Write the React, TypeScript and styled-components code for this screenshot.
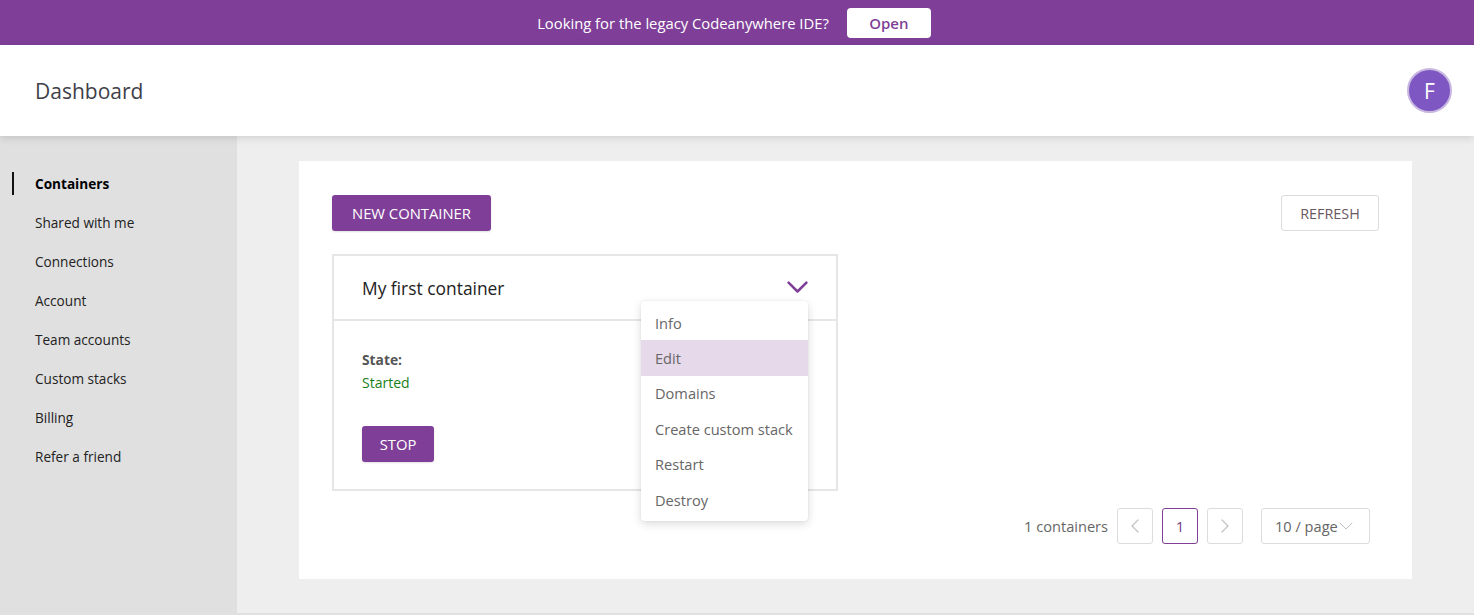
import React from "react";
import styled, { createGlobalStyle } from "styled-components";

const Global = createGlobalStyle`
  html, body { margin: 0; padding: 0; }
  body {
    font-family: "Open Sans", "Noto Sans", "Liberation Sans", sans-serif;
    background: #eeeeee;
    width: 1474px;
    height: 615px;
    overflow: hidden;
  }
  * { box-sizing: border-box; }
`;

const PURPLE = "#7f3f98";

const Page = styled.div`
  display: flex;
  flex-direction: column;
  height: 615px;
`;

const Banner = styled.div`
  height: 45px;
  background: ${PURPLE};
  display: flex;
  align-items: center;
  justify-content: center;
  gap: 18px;
  padding-right: 6px;
  color: #fff;
  font-size: 14.8px;
`;

const BannerText = styled.span``;

const OpenButton = styled.button`
  width: 84px;
  height: 30px;
  border: none;
  border-radius: 4px;
  background: #fff;
  color: ${PURPLE};
  font-family: inherit;
  font-size: 15px;
  font-weight: 600;
`;

const Header = styled.header`
  height: 91px;
  background: #fff;
  display: flex;
  align-items: center;
  justify-content: space-between;
  padding: 0 22px 0 35px;
  box-shadow: 0 2px 8px rgba(0, 0, 0, 0.13);
  position: relative;
  z-index: 2;
`;

const Title = styled.h1`
  margin: 0;
  font-size: 21px;
  font-weight: 400;
  color: #3f3f4a;
`;

const Avatar = styled.div`
  width: 45px;
  height: 45px;
  border-radius: 50%;
  background: #7e57c2;
  border: 2px solid #c9b8e2;
  color: #fff;
  display: flex;
  align-items: center;
  justify-content: center;
  font-size: 21px;
`;

const Body = styled.div`
  flex: 1;
  display: flex;
  min-height: 0;
`;

const Sidebar = styled.nav`
  width: 237px;
  background: #e0e0e0;
  padding-top: 28px;
  display: flex;
  flex-direction: column;
`;

const NavItem = styled.div<{ $active?: boolean }>`
  position: relative;
  height: 39px;
  display: flex;
  align-items: center;
  padding-left: 35px;
  font-size: 13.6px;
  color: ${(p) => (p.$active ? "#000" : "#222")};
  font-weight: ${(p) => (p.$active ? 700 : 400)};
  &::before {
    content: "";
    display: ${(p) => (p.$active ? "block" : "none")};
    position: absolute;
    left: 12px;
    top: 8px;
    width: 2px;
    height: 23px;
    background: #111;
  }
`;

const Main = styled.main`
  flex: 1;
  padding: 25px 62px 0 62px;
  border-bottom: 2px solid #e0e0e0;
`;

const Panel = styled.section`
  background: #fff;
  height: 418px;
  padding: 34px 33px 0 33px;
  display: flex;
  flex-direction: column;
`;

const Toolbar = styled.div`
  display: flex;
  justify-content: space-between;
  align-items: center;
`;

const PrimaryButton = styled.button<{ $w: number }>`
  width: ${(p) => p.$w}px;
  height: 36px;
  border: none;
  border-radius: 3px;
  background: ${PURPLE};
  color: #fff;
  font-family: inherit;
  font-size: 14.8px;
  text-transform: uppercase;
  box-shadow: 0 1px 2px rgba(0, 0, 0, 0.12);
`;

const OutlineButton = styled.button`
  width: 98px;
  height: 36px;
  background: #fff;
  border: 1px solid #dcdcdc;
  border-radius: 3px;
  color: #6b5761;
  font-family: inherit;
  font-size: 14.4px;
  text-transform: uppercase;
`;

const ContainerCard = styled.div`
  position: relative;
  margin-top: 23px;
  width: 506px;
  height: 237px;
  border: 2px solid #e6e6e6;
`;

const CardHeader = styled.div`
  height: 65px;
  display: flex;
  align-items: center;
  justify-content: space-between;
  padding: 0 28px 0 28px;
  border-bottom: 2px solid #e6e6e6;
`;

const CardTitle = styled.div`
  font-size: 17.4px;
  font-weight: 500;
  color: #222;
`;

const CardBody = styled.div`
  padding: 29px 28px 0 28px;
  display: flex;
  flex-direction: column;
`;

const Label = styled.div`
  font-size: 13.8px;
  font-weight: 700;
  color: #555;
  line-height: 20px;
`;

const StateValue = styled.div`
  font-size: 14px;
  color: #1a7f1a;
  line-height: 26px;
`;

const StopWrap = styled.div`
  margin-top: 30px;
`;

const Menu = styled.ul`
  position: absolute;
  left: 307px;
  top: 45px;
  width: 167px;
  margin: 0;
  padding: 4px 0;
  list-style: none;
  background: #fff;
  border-radius: 4px;
  box-shadow: 0 3px 10px rgba(0, 0, 0, 0.14), 0 0 2px rgba(0, 0, 0, 0.08);
`;

const MenuItem = styled.li<{ $hl?: boolean }>`
  height: 35.4px;
  display: flex;
  align-items: center;
  padding-left: 14px;
  font-size: 14.6px;
  color: #666;
  background: ${(p) => (p.$hl ? "#e6d9ea" : "transparent")};
`;

const Pager = styled.div`
  margin-top: 17px;
  margin-right: 9px;
  display: flex;
  justify-content: flex-end;
  align-items: center;
`;

const Count = styled.span`
  font-size: 14.6px;
  color: #666;
  margin-right: 9px;
`;

const PageBox = styled.div<{ $active?: boolean }>`
  width: 36px;
  height: 36px;
  margin-right: 9px;
  border: 1px solid ${(p) => (p.$active ? PURPLE : "#dcdcdc")};
  border-radius: 3px;
  display: flex;
  align-items: center;
  justify-content: center;
  font-size: 15px;
  color: ${(p) => (p.$active ? "#7a3c7c" : "#c4c4c4")};
`;

const SizeSelect = styled.div`
  margin-left: 9px;
  width: 109px;
  height: 36px;
  border: 1px solid #dcdcdc;
  border-radius: 3px;
  display: flex;
  align-items: center;
  padding-left: 13px;
  font-size: 14.6px;
  color: #666;
  gap: 1px;
`;

const Chevron = ({ size, color, stroke }: { size: number; color: string; stroke: number }) => (
  <svg width={size} height={size * 0.6} viewBox="0 0 20 12" fill="none">
    <path d="M1.5 1.5 L10 10 L18.5 1.5" stroke={color} strokeWidth={stroke} strokeLinecap="round" strokeLinejoin="round" />
  </svg>
);

const Arrow = ({ dir }: { dir: "left" | "right" }) => (
  <svg width="8" height="14" viewBox="0 0 8 14" fill="none">
    <path
      d={dir === "left" ? "M7 1 L1 7 L7 13" : "M1 1 L7 7 L1 13"}
      stroke="#c4c4c4"
      strokeWidth="1.3"
      strokeLinecap="round"
      strokeLinejoin="round"
    />
  </svg>
);

const navItems = [
  "Containers",
  "Shared with me",
  "Connections",
  "Account",
  "Team accounts",
  "Custom stacks",
  "Billing",
  "Refer a friend",
];

const menuItems = ["Info", "Edit", "Domains", "Create custom stack", "Restart", "Destroy"];

export default function App() {
  return (
    <>
      <Global />
      <Page>
        <Banner>
          <BannerText>Looking for the legacy Codeanywhere IDE?</BannerText>
          <OpenButton>Open</OpenButton>
        </Banner>
        <Header>
          <Title>Dashboard</Title>
          <Avatar>F</Avatar>
        </Header>
        <Body>
          <Sidebar>
            {navItems.map((n, i) => (
              <NavItem key={n} $active={i === 0}>
                {n}
              </NavItem>
            ))}
          </Sidebar>
          <Main>
            <Panel>
              <Toolbar>
                <PrimaryButton $w={159}>New container</PrimaryButton>
                <OutlineButton>Refresh</OutlineButton>
              </Toolbar>
              <ContainerCard>
                <CardHeader>
                  <CardTitle>My first container</CardTitle>
                  <Chevron size={21} color="#7f3f98" stroke={2.4} />
                </CardHeader>
                <CardBody>
                  <Label>State:</Label>
                  <StateValue>Started</StateValue>
                  <StopWrap>
                    <PrimaryButton $w={72}>Stop</PrimaryButton>
                  </StopWrap>
                </CardBody>
                <Menu>
                  {menuItems.map((m) => (
                    <MenuItem key={m} $hl={m === "Edit"}>
                      {m}
                    </MenuItem>
                  ))}
                </Menu>
              </ContainerCard>
              <Pager>
                <Count>1 containers</Count>
                <PageBox>
                  <Arrow dir="left" />
                </PageBox>
                <PageBox $active>1</PageBox>
                <PageBox>
                  <Arrow dir="right" />
                </PageBox>
                <SizeSelect>
                  10 / page
                  <Chevron size={14} color="#bdbdbd" stroke={1.4} />
                </SizeSelect>
              </Pager>
            </Panel>
          </Main>
        </Body>
      </Page>
    </>
  );
}
